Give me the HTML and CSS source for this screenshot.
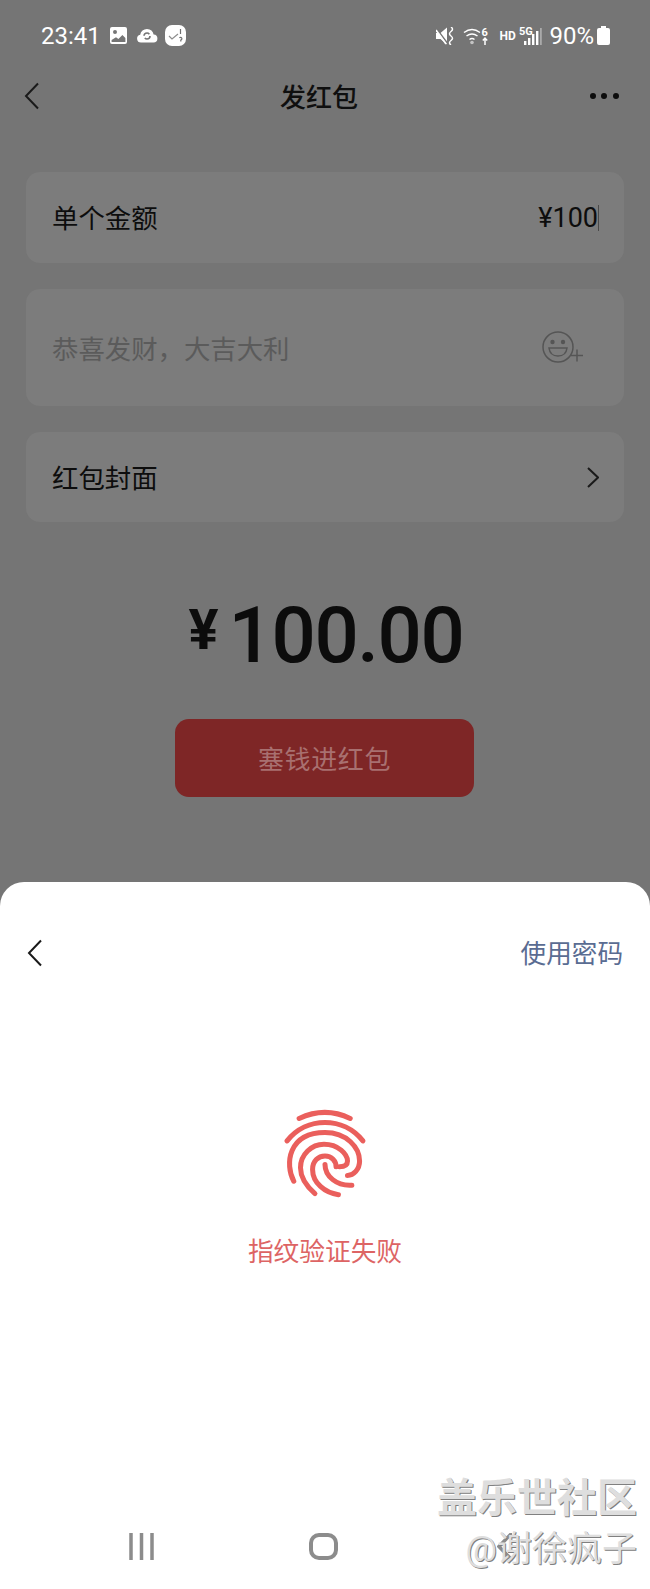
FILE: index.html
```html
<!DOCTYPE html>
<html lang="zh-CN">
<head>
    <meta charset="UTF-8">
    <meta name="viewport" content="width=device-width, initial-scale=1.0">
    <title>发红包</title>
    <link rel="stylesheet" href="styles.css">
</head>
<body>
    <div class="phone">
        <div class="dimmed">
            <div class="status-bar">
                <div class="status-left">
                    <span class="status-text status-time">23:41</span>
                    <svg class="ico-gallery" width="17" height="17" viewBox="0 0 17 17">
                        <path fill="#fff" fill-rule="evenodd" d="M2 0h13a2 2 0 0 1 2 2v13a2 2 0 0 1-2 2H2a2 2 0 0 1-2-2V2a2 2 0 0 1 2-2zM1.600 13v2h13.800v-4l-3-3-4 4-2.400-1.800zM5 3a2 2 0 1 0 0 4 2 2 0 0 0 0-4z"/>
                    </svg>
                    <svg class="ico-cloud" width="22" height="15" viewBox="0 0 22 15">
                        <path fill="#fff" d="M5 14.600a4 4 0 0 1-.8-7.900A6.800 6.800 0 0 1 11 1a6.800 6.800 0 0 1 6.600 5.600 4 4 0 0 1-.4 8z"/>
                        <circle cx="11" cy="8" r="3" fill="none" stroke="#757575" stroke-width="1.600" stroke-dasharray="7 2.400"/>
                    </svg>
                    <svg class="ico-app" width="21" height="21" viewBox="0 0 21 21">
                        <rect width="21" height="21" rx="7" fill="#fff"/>
                        <path d="M4 11l3 3 6-5" fill="none" stroke="#8d8d8d" stroke-width="1.200"/>
                        <path d="M15.500 4v5M14.500 13a1.300 1.300 0 1 1 1.300 2v1.500" fill="none" stroke="#6f6f6f" stroke-width="1.200"/>
                    </svg>
                </div>
                <div class="status-right">
                    <svg class="ico-mute" width="18" height="18" viewBox="0 0 18 18">
                        <path fill="#fff" d="M0 6h4.500L11 .5v17L4.500 12H0z"/>
                        <path d="M0 1l12 16" stroke="#757575" stroke-width="1.600"/>
                        <path d="M0 3l10 14" stroke="#fff" stroke-width="1.600"/>
                        <path d="M15 0q3 2.250 0 4.500t0 4.500 0 4.500 0 4.500" fill="none" stroke="#fff" stroke-width="1.500"/>
                    </svg>
                    <svg class="ico-wifi" width="26" height="18" viewBox="0 0 26 18">
                        <path d="M1 5.500q8-6 16 0M3.500 9q5.500-4 11 0M6.500 12.500q2.500-2 5 0" fill="none" stroke="#fff" stroke-width="1.500"/>
                        <circle cx="9" cy="15.500" r="1.800" fill="#c4c4c4"/>
                        <text x="18.500" y="9" class="ico-label">6</text>
                        <path d="M22 18v-6M19.800 13.500l2.200-2.300 2.200 2.300" fill="none" stroke="#fff" stroke-width="1.500"/>
                    </svg>
                    <span class="status-hd">HD</span>
                    <svg class="ico-signal" width="23" height="19" viewBox="0 0 23 19">
                        <text x="0" y="9" class="ico-label">5G</text>
                        <rect x="5" y="15" width="2.400" height="4" fill="#fff"/>
                        <rect x="9" y="12" width="2.400" height="7" fill="#fff"/>
                        <rect x="13" y="8" width="2.400" height="11" fill="#fff"/>
                        <rect x="17" y="5" width="2.400" height="14" fill="#fff"/>
                        <rect x="21" y="2" width="1.800" height="17" fill="#aaa"/>
                    </svg>
                    <span class="status-text status-battery">90%</span>
                    <svg class="ico-battery" width="13" height="19" viewBox="0 0 13 19">
                        <path fill="#fff" d="M4 0h5v2h2a2 2 0 0 1 2 2v13a2 2 0 0 1-2 2H2a2 2 0 0 1-2-2V4a2 2 0 0 1 2-2h2z"/>
                    </svg>
                </div>
            </div>

            <div class="nav-bar">
                <svg class="chevron" width="16" height="28" viewBox="0 0 16 28">
                    <path d="M14 1.500L2 14l12 12.500"/>
                </svg>
                <h1 class="nav-title">发红包</h1>
                <div class="dots"><i></i><i></i><i></i></div>
            </div>

            <div class="form">
                <div class="card card-amount">
                    <span class="card-label">单个金额</span>
                    <span class="amount-input">¥100</span>
                </div>
                <div class="card card-message">
                    <span class="card-hint">恭喜发财，大吉大利</span>
                    <svg class="ico-smile" width="42" height="34" viewBox="0 0 42 34">
                        <circle cx="16" cy="16" r="15" fill="none" stroke="#555" stroke-width="1.500"/>
                        <circle cx="10.500" cy="11" r="2.200" fill="#555"/>
                        <circle cx="21" cy="11" r="2.200" fill="#555"/>
                        <path d="M7 17h18q-1 8-9 8t-9-8z" fill="none" stroke="#555" stroke-width="1.500"/>
                        <path d="M29 24.500h12M35 18.500v12" fill="none" stroke="#555" stroke-width="1.500"/>
                    </svg>
                </div>
                <div class="card card-cover">
                    <span class="card-label">红包封面</span>
                    <svg class="chevron chevron-small" width="12" height="21" viewBox="0 0 12 21">
                        <path d="M1 1l10 9.500L1 20"/>
                    </svg>
                </div>
            </div>

            <div class="total">
                <span class="total-sign">¥</span>
                <span class="total-value">100.00</span>
            </div>
            <div class="pay-button">塞钱进红包</div>
        </div>

        <div class="sheet">
            <div class="sheet-head">
                <svg class="chevron" width="16" height="28" viewBox="0 0 16 28">
                    <path d="M14 1.500L2 14l12 12.500"/>
                </svg>
                <span class="use-password">使用密码</span>
            </div>
            <div class="finger">
                <svg class="finger-icon" width="84" height="94" viewBox="160 45 250 280">
                    <path d="M208 88Q285 52 360 88"/>
                    <path d="M172 155C230 82 340 82 398 155"/>
                    <path d="M192 275C165 225 175 130 285 130C350 130 388 175 388 215C388 240 370 258 352 258"/>
                    <path d="M255 312C230 290 212 265 212 235C212 195 245 165 282 165C325 165 352 195 352 215C352 225 345 232 328 232"/>
                    <path d="M325 315C285 310 248 280 248 240C248 215 265 200 285 200C305 200 318 215 318 232"/>
                    <path d="M285 225C285 260 320 290 365 287"/>
                </svg>
                <div class="finger-text">指纹验证失败</div>
            </div>
            <div class="system-nav">
                <svg class="sys-recent" width="25" height="27" viewBox="0 0 25 27">
                    <path d="M2 0v27M12.500 0v27M23 0v27"/>
                </svg>
                <div class="sys-home"></div>
                <svg class="sys-back" width="15" height="27" viewBox="0 0 15 27">
                    <path d="M14 1L2 13.500 14 26"/>
                </svg>
            </div>
        </div>

        <div class="watermark">
            <div class="watermark-name">盖乐世社区</div>
            <div class="watermark-user">@谢徐疯子</div>
        </div>
    </div>
</body>
</html>
```

FILE: styles.css
```css
* {
    box-sizing: border-box;
}
body {
    margin: 0;
    background-color: #757575;
    font-family: Roboto, "Noto Sans CJK SC", sans-serif;
}
.phone {
    position: relative;
    width: 650px;
    height: 1589px;
    overflow: hidden;
}
.dimmed {
    height: 882px;
    display: flex;
    flex-direction: column;
}

/* status bar */
.status-bar {
    height: 71px;
    padding: 0 40px 0 41px;
    display: flex;
    align-items: center;
    justify-content: space-between;
}
.status-left,
.status-right {
    display: flex;
    align-items: center;
}
.status-text {
    color: #ffffff;
    font-size: 24px;
    line-height: 28px;
}
.status-time {
    width: 69px;
}
.ico-cloud {
    margin-left: 9px;
}
.ico-app {
    margin-left: 7px;
}
.ico-wifi {
    margin-left: 9px;
}
.status-hd {
    margin-left: 10px;
    width: 20px;
    color: #ffffff;
    font-size: 12px;
    font-weight: 700;
}
.status-battery {
    margin-left: 7px;
}
.ico-battery {
    margin-left: 3px;
}
.ico-label {
    fill: #ffffff;
    font-family: Roboto, sans-serif;
    font-size: 11px;
    font-weight: 700;
}

/* nav */
.nav-bar {
    height: 50px;
    padding: 0 31px 0 24px;
    display: flex;
    align-items: center;
    justify-content: space-between;
}
.nav-title {
    margin: 0 0 2px 8px;
    font-size: 26px;
    font-weight: 500;
    color: #0f0f0f;
}
.chevron path {
    fill: none;
    stroke: #1a1a1a;
    stroke-width: 2;
}
.dots {
    display: flex;
    gap: 5.500px;
}
.dots i {
    width: 6px;
    height: 6px;
    border-radius: 50%;
    background-color: #0c0c0c;
}

/* form */
.form {
    padding: 51px 26px 0;
    display: flex;
    flex-direction: column;
    gap: 26px;
}
.card {
    display: flex;
    align-items: center;
    justify-content: space-between;
    padding: 0 26px;
    background-color: #7c7c7c;
    border-radius: 14px;
    font-size: 26.400px;
}
.card-amount {
    height: 91px;
    padding-right: 25px;
}
.card-message {
    height: 117px;
    padding-right: 40px;
}
.card-cover {
    height: 90px;
    padding-right: 25px;
}
.card-label {
    color: #0d0d0d;
    margin-bottom: 2px;
}
.card-hint {
    color: #5b5b5b;
    font-size: 26.400px;
}
.amount-input {
    color: #0d0d0d;
    font-size: 27px;
    border-right: 1px solid #4a4a4a;
    line-height: 26px;
}

/* total and pay */
.total {
    margin-top: 63px;
    height: 100px;
    padding-left: 2px;
    display: flex;
    justify-content: center;
    align-items: center;
    color: #0c0c0c;
}
.total-sign {
    margin-right: 10px;
    margin-bottom: 10px;
    font-size: 56px;
    font-weight: 700;
}
.total-value {
    font-size: 78px;
    font-weight: 500;
    letter-spacing: -1.400px;
}
.pay-button {
    width: 299px;
    height: 78px;
    margin: 34px 0 0 175px;
    padding-bottom: 2px;
    display: flex;
    align-items: center;
    justify-content: center;
    background-color: #7e2626;
    border-radius: 14px;
    color: #a87070;
    font-size: 26px;
    letter-spacing: 0.600px;
}

/* bottom sheet */
.sheet {
    height: 707px;
    display: flex;
    flex-direction: column;
    background-color: #ffffff;
    border-radius: 24px 24px 0 0;
}
.sheet-head {
    height: 142px;
    padding: 0 27px;
    display: flex;
    align-items: center;
    justify-content: space-between;
}
.use-password {
    margin-bottom: 4px;
    color: #5a6c92;
    font-size: 25.600px;
}
.finger {
    margin-top: 80px;
    display: flex;
    flex-direction: column;
    align-items: center;
}
.finger-icon path {
    fill: none;
    stroke: #ea5f5c;
    stroke-width: 15;
    stroke-linecap: round;
}
.finger-text {
    margin-top: 33px;
    color: #dd6464;
    font-size: 25.700px;
}
.system-nav {
    margin-top: auto;
    height: 56px;
    padding-left: 129px;
    display: flex;
}
.sys-recent path,
.sys-back path {
    fill: none;
    stroke: #8c8c8c;
    stroke-width: 3.500;
    stroke-linecap: round;
}
.sys-home {
    width: 29px;
    height: 27px;
    margin: 0 159px 0 155px;
    border: 4px solid #8c8c8c;
    border-radius: 10px;
}

/* forum watermark sits over the nav bar */
.watermark {
    position: absolute;
    right: 13px;
    bottom: 14px;
    text-align: right;
    color: #dedede;
    text-shadow: 1px 1px 0 #808080;
}
.watermark-name {
    font-size: 40px;
    line-height: 52px;
    font-weight: 700;
}
.watermark-user {
    font-size: 35px;
    line-height: 50px;
    white-space: nowrap;
}
```
